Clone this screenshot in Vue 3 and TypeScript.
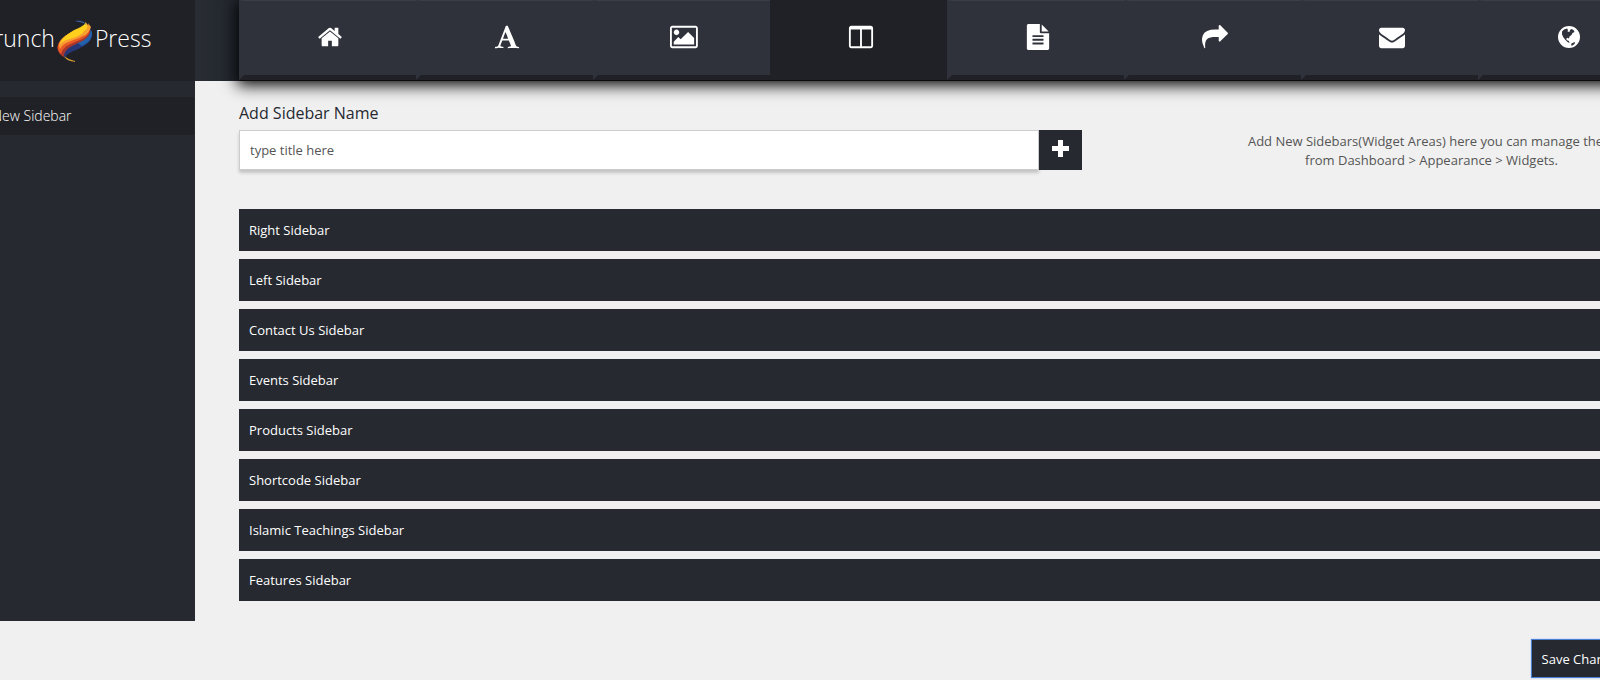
<script setup lang="ts">
import { ref } from 'vue'

interface Tab {
  label: string
  viewBox?: string
  path: string
}

const tabs: Tab[] = [
  { label: 'General', path: 'M1472 992v480q0 26-19 45t-45 19h-384v-384h-256v384h-384q-26 0-45-19t-19-45v-480q0-1 .5-3t.5-3l575-474 575 474q1 2 1 6zm223-69l-62 74q-8 9-21 11h-3q-13 0-21-7l-692-577-692 577q-12 8-24 7-13-2-21-11l-62-74q-8-10-7-23.5t11-21.5l719-599q32-26 76-26t76 26l244 204v-195q0-14 9-23t23-9h192q14 0 23 9t9 23v408l219 182q10 8 11 21.5t-7 23.5z' },
  { label: 'Typography', path: 'M789 559l-170 450q33 0 136.5 2t160.5 2q19 0 57-2-87-253-184-452zm-725 1105l2-79q23-7 56-12.5t57-10.5 49.5-14.5 44.5-29 31-50.5l237-616 280-724h128q8 14 11 21l205 480q33 78 106 257.5t114 274.5q15 34 58 144.5t72 168.5q20 45 35 57 19 15 88 29.5t84 20.5q6 38 6 57 0 5-.5 13.5t-.5 12.5q-63 0-190-8t-191-8q-76 0-215 7t-178 8q0-43 4-78l131-28q1 0 12.5-2.5t15.5-3.5 14.5-4.5 15-6.5 11-8 9-11 2.5-14q0-16-31-96.5t-72-177.5-42-100l-450-2q-26 58-76.5 195.5t-50.5 162.5q0 22 14 37.5t43.5 24.5 48.5 13.5 57 8.5 41 4q1 19 1 58 0 9-2 27-58 0-174.5-10t-174.5-10q-8 0-26.5 4t-21.5 4q-80 14-188 14z' },
  { label: 'Slider', viewBox: '-64 0 1920 1792', path: 'M576 576q0 80-56 136t-136 56-136-56-56-136 56-136 136-56 136 56 56 136zm1024 384v448h-1408v-192l320-320 160 160 512-512zm96-704h-1600q-13 0-22.5 9.5t-9.5 22.5v1216q0 13 9.5 22.5t22.5 9.5h1600q13 0 22.5-9.5t9.5-22.5v-1216q0-13-9.5-22.5t-22.5-9.5zm160 32v1216q0 66-47 113t-113 47h-1600q-66 0-113-47t-47-113v-1216q0-66 47-113t113-47h1600q66 0 113 47t47 113z' },
  { label: 'Sidebars', path: 'M224 1536h608v-1152h-640v1120q0 13 9.5 22.5t22.5 9.5zm1376-32v-1120h-640v1152h608q13 0 22.5-9.5t9.5-22.5zm128-1216v1216q0 66-47 113t-113 47h-1344q-66 0-113-47t-47-113v-1216q0-66 47-113t113-47h1344q66 0 113 47t47 113z' },
  { label: 'Pages', path: 'M1596 476q14 14 28 36h-472v-472q22 14 36 28zm-476 164h544v1056q0 40-28 68t-68 28h-1344q-40 0-68-28t-28-68v-1600q0-40 28-68t68-28h800v544q0 40 28 68t68 28zm160 736v-64q0-14-9-23t-23-9h-704q-14 0-23 9t-9 23v64q0 14 9 23t23 9h704q14 0 23-9t9-23zm0-256v-64q0-14-9-23t-23-9h-704q-14 0-23 9t-9 23v64q0 14 9 23t23 9h704q14 0 23-9t9-23zm0-256v-64q0-14-9-23t-23-9h-704q-14 0-23 9t-9 23v64q0 14 9 23t23 9h704q14 0 23-9t9-23z' },
  { label: 'Sharing', path: 'M1792 640q0 26-19 45l-512 512q-19 19-45 19t-45-19-19-45v-256h-224q-98 0-175.5 6t-154 21.5-133 42.5-105.5 69.5-80 101-48.5 138.5-17.5 181q0 55 5 123 0 6 2.5 23.5t2.5 26.5q0 15-8.5 25t-23.5 10q-16 0-28-17-7-9-13-22t-13.5-30-10.5-24q-127-285-127-451 0-199 53-333 162-403 875-403h224v-256q0-26 19-45t45-19 45 19l512 512q19 19 19 45z' },
  { label: 'Newsletter', path: 'M1792 710v794q0 66-47 113t-113 47h-1472q-66 0-113-47t-47-113v-794q44 49 101 87 362 246 497 345 57 42 92.5 65.5t94.5 48 110 24.5h2q51 0 110-24.5t94.5-48 92.5-65.5q170-123 498-345 57-39 100-87zm0-294q0 79-49 151t-122 123q-376 261-468 325-10 7-42.5 31t-54 38.5-52 32.5-57.5 27-50 9h-2q-23 0-50-9t-57.5-27-52-32.5-54-38.5-42.5-31q-91-64-262-182.5t-205-142.5q-62-42-117-115.5t-55-136.5q0-78 41.5-130t118.5-52h1472q65 0 112.5 47t47.5 113z' },
  { label: 'Import', viewBox: '0 0 26 26', path: 'M13 2a11 11 0 1 0 0 22 11 11 0 0 0 0-22zM8 5.500L11 4.500L12 6L11.500 7.500L13.500 8L14 6L15.500 5L17.500 6L18.500 8L16.500 9L15.500 11L13.500 12.500L13 14.500L11.500 13.800L10 15L11.500 16.500L13 17L13.500 19L11.500 18L9.500 16L7.500 13.500L6 10.500L6 7.500ZM15.500 19.500L17.500 18.500L19 18L18.500 20L16.500 21.500L15 21.500Z' },
]
const active = ref(3)

const sidebars = ref<string[]>([
  'Right Sidebar',
  'Left Sidebar',
  'Contact Us Sidebar',
  'Events Sidebar',
  'Products Sidebar',
  'Shortcode Sidebar',
  'Islamic Teachings Sidebar',
  'Features Sidebar',
])
const title = ref('')

function addSidebar(): void {
  const name = title.value.trim()
  if (name) sidebars.value.push(name)
  title.value = ''
}
</script>

<template>
  <div class="page">
    <aside class="side">
      <a class="logo" href="#">
        <span>Crunch</span>
        <svg class="emblem" viewBox="0 0 36 42" aria-hidden="true">
          <path d="M33 8c5 8 1 14-8 19S9 33 8 38L5 35c1-7 8-10 15-14s11-7 13-13z" fill="#263778" />
          <path d="M35 13c0 6-4 10-10 13l-6-4c7-3 13-7 15-12z" fill="#2262ac" />
          <path d="M29 3c6 5 6 12-2 17S7 27 7 37C0 34-2 26 4 20S29 13 29 3z" fill="#a9352b" />
          <path d="M29 3c6 6 4 12-4 16S6 25 4 34c-6-6-3-12 4-17S28 10 29 3z" fill="#e75a25" />
          <path d="M29 3c6 6 3 10-5 14S6 22 3 29c-3-6 1-11 8-15S28 8 29 3z" fill="#f99d33" />
          <path d="M28 2c5 5 2 9-5 13S8 19 3 24c1-4 5-8 11-12S29 6 28 2z" fill="#fecf1c" />
          <path d="M34 7c-1 4-4 7-7 9l-1-4c4-3 6-6 5-9z" fill="#f6a12f" />
          <path d="M18 1c5-1 9 0 12 4-4-3-8-3-12-4z" fill="#4164ae" />
          <path d="M7 36c2 4 6 5 11 6v-1c-5-1-8-3-11-5z" fill="#dca02d" />
        </svg>
        <span>Press</span>
      </a>
      <nav class="side-nav"><a href="#">New Sidebar</a></nav>
    </aside>

    <div class="body">
      <header class="top">
        <nav class="tabs">
          <button
            v-for="(tab, i) in tabs"
            :key="tab.label"
            type="button"
            class="tab"
            :class="{ active: i === active }"
            :aria-label="tab.label"
            @click="active = i"
          >
            <svg :viewBox="tab.viewBox ?? '0 0 1792 1792'" aria-hidden="true"><path :d="tab.path" fill="#fff" fill-rule="evenodd" /></svg>
          </button>
        </nav>
      </header>

      <main class="content">
        <form class="add" @submit.prevent="addSidebar">
          <div class="field">
            <label for="sidebar-name">Add Sidebar Name</label>
            <div class="row">
              <input id="sidebar-name" v-model="title" type="text" placeholder="type title here" />
              <button type="submit" class="plus" aria-label="Add sidebar">
                <svg viewBox="0 0 17 17" aria-hidden="true"><path d="M6 0h5v6h6v5h-6v6H6v-6H0V6h6z" fill="#fff" /></svg>
              </button>
            </div>
          </div>
          <p class="help">Add New Sidebars(Widget Areas) here you can manage them<br />from Dashboard &gt; Appearance &gt; Widgets.</p>
        </form>
        <ul class="list">
          <li v-for="name in sidebars" :key="name">{{ name }}</li>
        </ul>
        <div class="actions"><button type="button" class="save">Save Changes</button></div>
      </main>
    </div>
  </div>
</template>

<style>
html,
body {
  margin: 0;
  background: #f0f0f0;
  overflow: hidden;
}
</style>

<style scoped>
.page {
  display: flex;
  align-items: flex-start;
  width: calc(100% + 55px);
  min-height: 100vh;
  font: 13px/19px "Open Sans", sans-serif;
  color: #555;
}
.side {
  flex: 0 0 195px;
  min-height: 621px;
  background: #262930;
  overflow: hidden;
}
.logo {
  display: flex;
  align-items: center;
  height: 81px;
  margin-left: -20px;
  gap: 2px;
  background: #202126;
  color: #fff;
  font-size: 23px;
  font-weight: 300;
  text-decoration: none;
}
.logo span {
  padding-bottom: 5px;
}
.emblem {
  width: 36px;
  height: 42px;
}
.side-nav {
  margin: 16px 1px 0 0;
  background: #202126;
}
.side-nav a {
  display: block;
  margin-left: -8px;
  font-size: 14px;
  font-weight: 300;
  line-height: 38px;
  color: #fff;
  text-decoration: none;
}
.body {
  flex: 1;
  min-width: 0;
}
.top {
  display: flow-root;
  padding-left: 44px;
  background: linear-gradient(90deg, #292c33, #22272e 44px);
}
.tabs {
  display: flex;
  height: 80px;
  margin-bottom: 1px;
  box-shadow: 0 1px 0 #0c0c0e, 0 3px 15px 2px #000;
}
.tab {
  flex: 1;
  display: flex;
  justify-content: center;
  align-items: flex-start;
  box-sizing: border-box;
  padding: 23px 0 0;
  border: solid #2f323b;
  border-width: 1px 0 5px 5px;
  border-top-color: #3b3e47;
  border-bottom-color: #202126;
  background: #2f323b;
  cursor: pointer;
}
.tab.active {
  border-color: #202126;
  background: #202126;
}
.tab svg {
  height: 26px;
}
.content {
  padding: 20px 0 0 44px;
}
.add {
  display: flex;
}
.field {
  flex: 0 0 843px;
}
.field label {
  display: block;
  margin-bottom: 5px;
  font-size: 16px;
  line-height: 24px;
  font-weight: 500;
  color: #262930;
}
.row {
  display: flex;
}
.row input {
  flex: 1;
  box-sizing: border-box;
  height: 40px;
  padding: 0 10px;
  border: 1px solid #ccc;
  border-radius: 0;
  outline: 0;
  box-shadow: 0 3px 3px #c4c4c4;
  font: inherit;
}
.row input::placeholder {
  color: #555;
  opacity: 1;
}
.plus {
  display: grid;
  place-items: center;
  width: 43px;
  height: 40px;
  padding: 0 0 3px;
  border: 0;
  background: #262930;
}
.plus svg {
  width: 17px;
}
.help {
  flex: 1;
  margin: 31px 0 0 126px;
  text-align: center;
}
.list {
  margin: 39px 0 0;
  padding: 0;
  list-style: none;
}
.list li {
  margin-bottom: 8px;
  padding: 0 10px;
  background: #262930;
  color: #fff;
  line-height: 42px;
  font-weight: 500;
}
.actions {
  display: flex;
  justify-content: flex-end;
  padding: 30px 19px 0 0;
}
.save {
  height: 39px;
  padding: 0 10px;
  border: 1px solid #4a80d4;
  background: #262930;
  box-shadow: 0 0 1px #5b9bff;
  color: #fff;
  font: 500 13px "Open Sans", sans-serif;
}
</style>
